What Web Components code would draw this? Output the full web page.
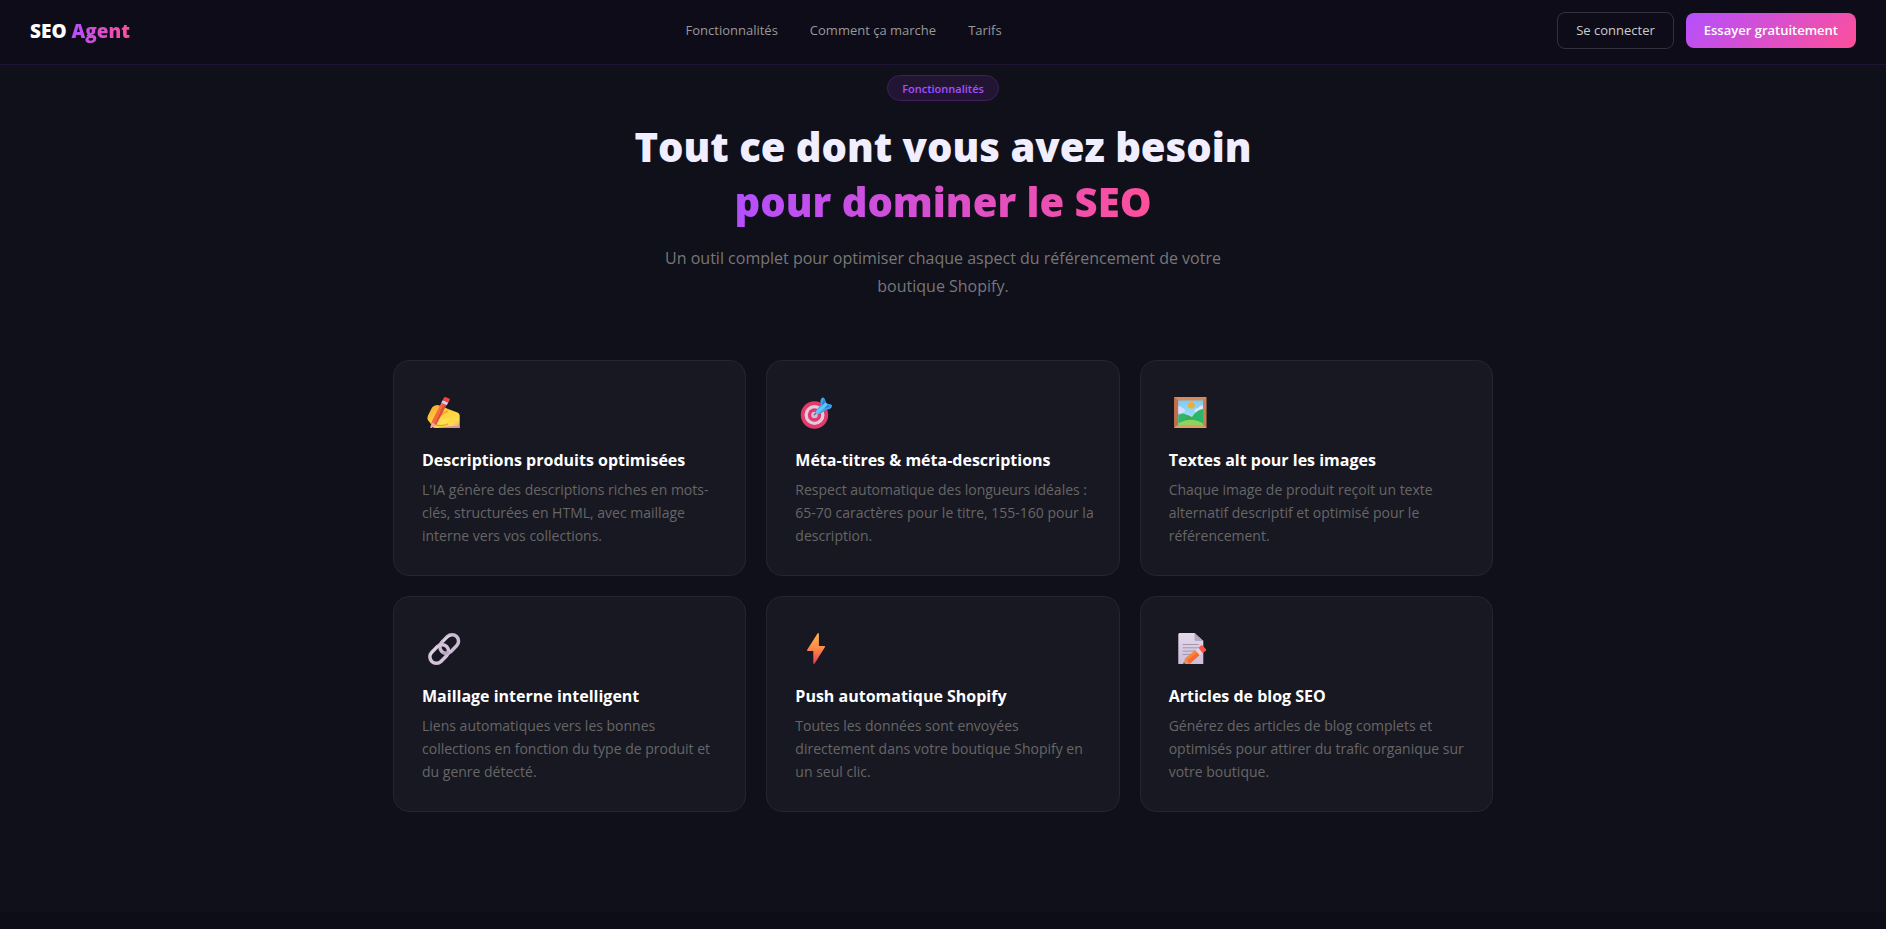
<!DOCTYPE html>
<html lang="fr">
<head>
  <meta charset="utf-8">
  <meta name="viewport" content="width=device-width, initial-scale=1">
  <title>SEO Agent</title>
  <style>
    :root {
      --bg: #0d0d18;
      --bg-section: #10101b;
      --card: #181822;
      --card-border: #25252f;
      --gradient: linear-gradient(135deg, #b44fff, #ff4f9a);
      --gradient-text: linear-gradient(90deg, #b44fff, #ff4f9a);
    }

    body {
      margin: 0;
      background: var(--bg);
      color: #f0eeff;
      font-family: "Segoe UI", "Open Sans", "Noto Sans", sans-serif;
      font-size: 16px;
    }
  </style>
</head>
<body>
  <site-header>
    <a slot="nav" href="#features">Fonctionnalités</a>
    <a slot="nav" href="#how">Comment ça marche</a>
    <a slot="nav" href="#pricing">Tarifs</a>
    <action-button slot="actions" variant="outline">Se connecter</action-button>
    <action-button slot="actions" variant="primary">Essayer gratuitement</action-button>
  </site-header>

  <features-section id="features">
    <section-heading slot="heading">
      <span slot="badge">Fonctionnalités</span>
      <span slot="title">Tout ce dont vous avez besoin</span>
      <span slot="accent">pour dominer le SEO</span>
      Un outil complet pour optimiser chaque aspect du référencement de votre boutique Shopify.
    </section-heading>

    <feature-card icon="writing">
      <span slot="title">Descriptions produits optimisées</span>
      L'IA génère des descriptions riches en mots-clés, structurées en HTML, avec maillage interne vers vos collections.
    </feature-card>
    <feature-card icon="target">
      <span slot="title">Méta-titres &amp; méta-descriptions</span>
      Respect automatique des longueurs idéales : 65-70 caractères pour le titre, 155-160 pour la description.
    </feature-card>
    <feature-card icon="picture">
      <span slot="title">Textes alt pour les images</span>
      Chaque image de produit reçoit un texte alternatif descriptif et optimisé pour le référencement.
    </feature-card>
    <feature-card icon="link">
      <span slot="title">Maillage interne intelligent</span>
      Liens automatiques vers les bonnes collections en fonction du type de produit et du genre détecté.
    </feature-card>
    <feature-card icon="bolt">
      <span slot="title">Push automatique Shopify</span>
      Toutes les données sont envoyées directement dans votre boutique Shopify en un seul clic.
    </feature-card>
    <feature-card icon="memo">
      <span slot="title">Articles de blog SEO</span>
      Générez des articles de blog complets et optimisés pour attirer du trafic organique sur votre boutique.
    </feature-card>
  </features-section>

  <script>
    const ICONS = {
      writing: `
        <defs>
          <linearGradient id="hand" x1="0" y1="0" x2="1" y2="1">
            <stop offset="0" stop-color="#f2a02a"/>
            <stop offset=".45" stop-color="#ffd23e"/>
            <stop offset=".8" stop-color="#ffdc4a"/>
            <stop offset="1" stop-color="#e58ea0"/>
          </linearGradient>
        </defs>
        <path d="M10 10.500Q12 8 15 8L20 9L26 12L35.500 15.500Q37.700 16.500 37.700 18.500V31H14Q9 31 9 27L5.800 23Q4.800 21 6 18.500Z" fill="url(#hand)"/>
        <path d="M18 19Q22 15 26 14" stroke="#f0a62c" stroke-width="1.500" fill="none"/>
        <path d="M13 25Q16 21 20 21.500Q24 23 27 21Q29 24 24 26.500Q19 28 16 27Z" fill="#ffe04e"/>
        <path d="M13 27.500Q19 30 26 27" stroke="#e8963a" stroke-width="1.300" fill="none"/>
        <path d="M15 31Q26 28.500 37.700 29V31Z" fill="#e08ea4"/>
        <path d="M19.500 5.500L24.500 7.800L14.500 27L9 31L8.300 30L10 24Z" fill="#f5693c"/>
        <path d="M22 6.600L24.500 7.800L14.500 27L12.500 28Z" fill="#d94f3a"/>
        <path d="M20.800 3L26.300 5.500L24.800 8.300L19.300 5.800Z" fill="#dcc8e6"/>
        <path d="M22 .6Q22.600-.3 24 .2L27 1.500Q28.200 2.200 27.800 3L26.300 5.500L20.800 3Z" fill="#f8403e"/>
        <path d="M10 25.500L13.500 27.500L9.500 31H8.300Z" fill="#f3a3b4"/>`,
      target: `
        <circle cx="19.500" cy="18" r="13.700" fill="#e33a68"/>
        <circle cx="19.500" cy="18" r="10" fill="#dccbe2"/>
        <circle cx="19.500" cy="18" r="6.700" fill="#e2386c"/>
        <circle cx="19.500" cy="18" r="3.300" fill="#cdbfd6"/>
        <path d="M19 18L24 13" stroke="#75718a" stroke-width="1.600"/>
        <path d="M21.500 13L26 7.500Q24.500 3 27 .8Q28.500-.3 29.500 1.500L31.500 6.500L36 7.500Q38 9 36 11Q34 13 31.500 12.500L26 16.500Q22 18 21 16Z" fill="#3fa4ee"/>
        <path d="M26.500 8.500L29 2L30.500 7L35.500 9.300L30 11.500Z" fill="#297ed8"/>
        <path d="M22.500 15L30.500 7.700" stroke="#5cc8f5" stroke-width="3.500" stroke-linecap="round"/>`,
      picture: `
        <defs>
          <linearGradient id="sky" x1="0" y1="0" x2="0" y2="1">
            <stop offset="0" stop-color="#79cdf5"/>
            <stop offset="1" stop-color="#b5e6fa"/>
          </linearGradient>
        </defs>
        <path d="M5.300 0H37.300V31H5.300Z" fill="#d98a5c"/>
        <path d="M5.300 0L9.300 3.500V28L5.300 31Z" fill="#bf7049"/>
        <path d="M37.300 0L34 3.500V28L37.300 31Z" fill="#c98055"/>
        <path d="M5.300 31L9.300 28H34L37.300 31Z" fill="#e39a68"/>
        <path d="M9.300 3.500H34V28H9.300Z" fill="url(#sky)"/>
        <path d="M9.300 9Q12.500 9 13 11Q16.500 11 16 14.500Q13 17 9.300 16Z" fill="#ddd9fa"/>
        <path d="M34 8.500Q30 8.500 29.500 11Q25.500 11 25.500 15L34 17Z" fill="#e2e4fb"/>
        <circle cx="22.300" cy="8.300" r="3.300" fill="#f5ac2e"/>
        <path d="M9.300 18Q14 15 18 18L23 20Q28 12.500 34 12V28H9.300Z" fill="#2eb568"/>
        <path d="M18 18Q22 19 24 23L22 28H15Z" fill="#46a84e"/>
        <path d="M9.300 28V26.500Q22 19 34 26.500V28Z" fill="#8fd45c"/>`,
      link: `
        <g fill="none" stroke-width="3.500">
          <rect x="-10.500" y="-6.500" width="21" height="13" rx="6.500" transform="translate(27.200 11) rotate(-45)" stroke="#cbbcd3"/>
          <rect x="-10.500" y="-6.500" width="21" height="13" rx="6.500" transform="translate(17.200 21) rotate(-45)" stroke="#d2c3da"/>
          <path d="M21 8.500Q25 4 29 2.700" stroke="#e3d7e8" stroke-width="1.300"/>
          <path d="M8.500 22Q11.500 17 15.500 13.500" stroke="#e6dbea" stroke-width="1.300"/>
          <path d="M20 19.500Q23.500 21.500 27 19" stroke="#b7a7c2" stroke-width="2.500"/>
        </g>`,
      bolt: `
        <defs>
          <linearGradient id="bolt" x1="0" y1="0" x2="0" y2="1">
            <stop offset="0" stop-color="#ffb04c"/>
            <stop offset=".45" stop-color="#ff9048"/>
            <stop offset="1" stop-color="#e43c58"/>
          </linearGradient>
        </defs>
        <path d="M22.500 .5Q23.800-.5 23.900 1V13H29.500Q30.400 13.200 30 14L19.700 30.500Q18.500 31.700 18.300 30V17.900H12.500Q11.600 17.700 12.200 16.700Z" fill="url(#bolt)"/>`,
      memo: `
        <defs>
          <linearGradient id="sheet" x1="0" y1="0" x2="0" y2="1">
            <stop offset="0" stop-color="#e4daeb"/>
            <stop offset="1" stop-color="#cdbcd8"/>
          </linearGradient>
        </defs>
        <path d="M10.300 0H25.500L34.300 8V31H9.300V1Z" fill="url(#sheet)"/>
        <path d="M25.500 0L34.300 8H27Q25.500 8 25.500 6.500Z" fill="#b3a7bd"/>
        <path d="M13.600 11.500H29.600M13.600 14.800H29.600M13.600 18.100H26M13.600 21.400H21" stroke="#a197ae" stroke-width="1"/>
        <path d="M16 25.500L26.500 17L30.500 22L20.500 31H15Z" fill="#fb8338"/>
        <path d="M18 27.500L28.500 19.500L30.500 22L20.500 31Z" fill="#f46a35"/>
        <path d="M16 25.500L20.500 31H14.300Z" fill="#d7997c"/>
        <path d="M14.800 29L16.500 31H14.200Z" fill="#8e3f59"/>
        <path d="M26.500 17L29.500 14.700L33.500 19.500L30.500 22Z" fill="#e3d2ea"/>
        <path d="M29.500 14.700L32 12.600Q33 11.800 33.900 12.900L37 16.300Q37.600 17.200 36.700 17.900L33.500 19.900Z" fill="#fa5444"/>`
    };

    class SiteHeader extends HTMLElement {
      constructor() {
        super();
        this.attachShadow({ mode: 'open' });
        this.shadowRoot.innerHTML = `
          <style>
            :host {
              display: block;
              background: #0d0c18;
              border-bottom: 1px solid #201434;
            }
            header {
              display: flex;
              align-items: center;
              justify-content: space-between;
              height: 64px;
              padding: 0 30px 4px;
              box-sizing: border-box;
            }
            .logo {
              padding-top: 2px;
              color: #fff;
              font-size: 19px;
              font-weight: 800;
              line-height: 24px;
              text-decoration: none;
            }
            .logo span {
              background: var(--gradient-text);
              -webkit-background-clip: text;
              background-clip: text;
              color: transparent;
            }
            nav, .actions {
              display: flex;
              align-items: center;
            }
            nav { gap: 32px; }
            .actions { gap: 12px; }
            ::slotted(a) {
              color: #999;
              font-size: 13px;
              line-height: 20px;
              text-decoration: none;
            }
          </style>
          <header>
            <a class="logo" href="#">SEO <span>Agent</span></a>
            <nav><slot name="nav"></slot></nav>
            <div class="actions"><slot name="actions"></slot></div>
          </header>`;
      }
    }
    customElements.define('site-header', SiteHeader);

    class ActionButton extends HTMLElement {
      constructor() {
        super();
        this.attachShadow({ mode: 'open' });
        this.shadowRoot.innerHTML = `
          <style>
            :host { display: block; }
            button {
              display: block;
              padding: 8px 18px;
              border: 1px solid #32313d;
              border-radius: 8px;
              background: none;
              color: #ccc;
              font-family: inherit;
              font-size: 13px;
              line-height: 19px;
              cursor: pointer;
            }
            :host([variant="primary"]) button {
              border: 0;
              background: var(--gradient);
              color: #fff;
              font-weight: 600;
            }
          </style>
          <button type="button"><slot></slot></button>`;
      }
    }
    customElements.define('action-button', ActionButton);

    class FeaturesSection extends HTMLElement {
      constructor() {
        super();
        this.attachShadow({ mode: 'open' });
        this.shadowRoot.innerHTML = `
          <style>
            :host {
              display: block;
              padding: 10px 24px 100px;
              background: var(--bg-section);
            }
            .grid {
              display: grid;
              grid-template-columns: repeat(3, 1fr);
              gap: 20px;
              max-width: 1100px;
              margin: 60px auto 0;
            }
            @media (max-width: 900px) {
              .grid { grid-template-columns: 1fr; }
            }
          </style>
          <slot name="heading"></slot>
          <div class="grid"><slot></slot></div>`;
      }
    }
    customElements.define('features-section', FeaturesSection);

    class SectionHeading extends HTMLElement {
      constructor() {
        super();
        this.attachShadow({ mode: 'open' });
        this.shadowRoot.innerHTML = `
          <style>
            :host {
              display: block;
              text-align: center;
            }
            .badge {
              display: inline-block;
              padding: 5px 14px 3px;
              border: 1px solid #3c1f5b;
              border-radius: 20px;
              background: #221534;
              color: #a94dff;
              font-size: 11px;
              font-weight: 600;
              line-height: 16px;
              vertical-align: top;
            }
            h2 {
              margin: 18px 0 15px;
              font-size: 40px;
              font-weight: 800;
              line-height: 55px;
            }
            .accent {
              background: var(--gradient-text);
              -webkit-background-clip: text;
              background-clip: text;
              color: transparent;
            }
            p {
              max-width: 580px;
              margin: 0 auto;
              color: #777;
              font-size: 16px;
              line-height: 28px;
            }
          </style>
          <div class="badge"><slot name="badge"></slot></div>
          <h2>
            <slot name="title"></slot><br>
            <span class="accent"><slot name="accent"></slot></span>
          </h2>
          <p><slot></slot></p>`;
      }
    }
    customElements.define('section-heading', SectionHeading);

    class FeatureCard extends HTMLElement {
      constructor() {
        super();
        this.attachShadow({ mode: 'open' });
      }

      connectedCallback() {
        const icon = ICONS[this.getAttribute('icon')] || '';
        this.shadowRoot.innerHTML = `
          <style>
            :host {
              display: block;
              padding: 36px 20px 28px 28px;
              border: 1px solid var(--card-border);
              border-radius: 16px;
              background: var(--card);
            }
            svg {
              display: block;
              overflow: visible;
            }
            h3 {
              margin: 19px 0 5px;
              color: #fff;
              font-size: 16px;
              font-weight: 700;
              line-height: 26px;
            }
            p {
              margin: 0;
              color: #666;
              font-size: 14px;
              line-height: 23px;
            }
          </style>
          <svg width="42" height="31" viewBox="0 0 42 31" aria-hidden="true">${icon}</svg>
          <h3><slot name="title"></slot></h3>
          <p><slot></slot></p>`;
      }
    }
    customElements.define('feature-card', FeatureCard);
  </script>
</body>
</html>
